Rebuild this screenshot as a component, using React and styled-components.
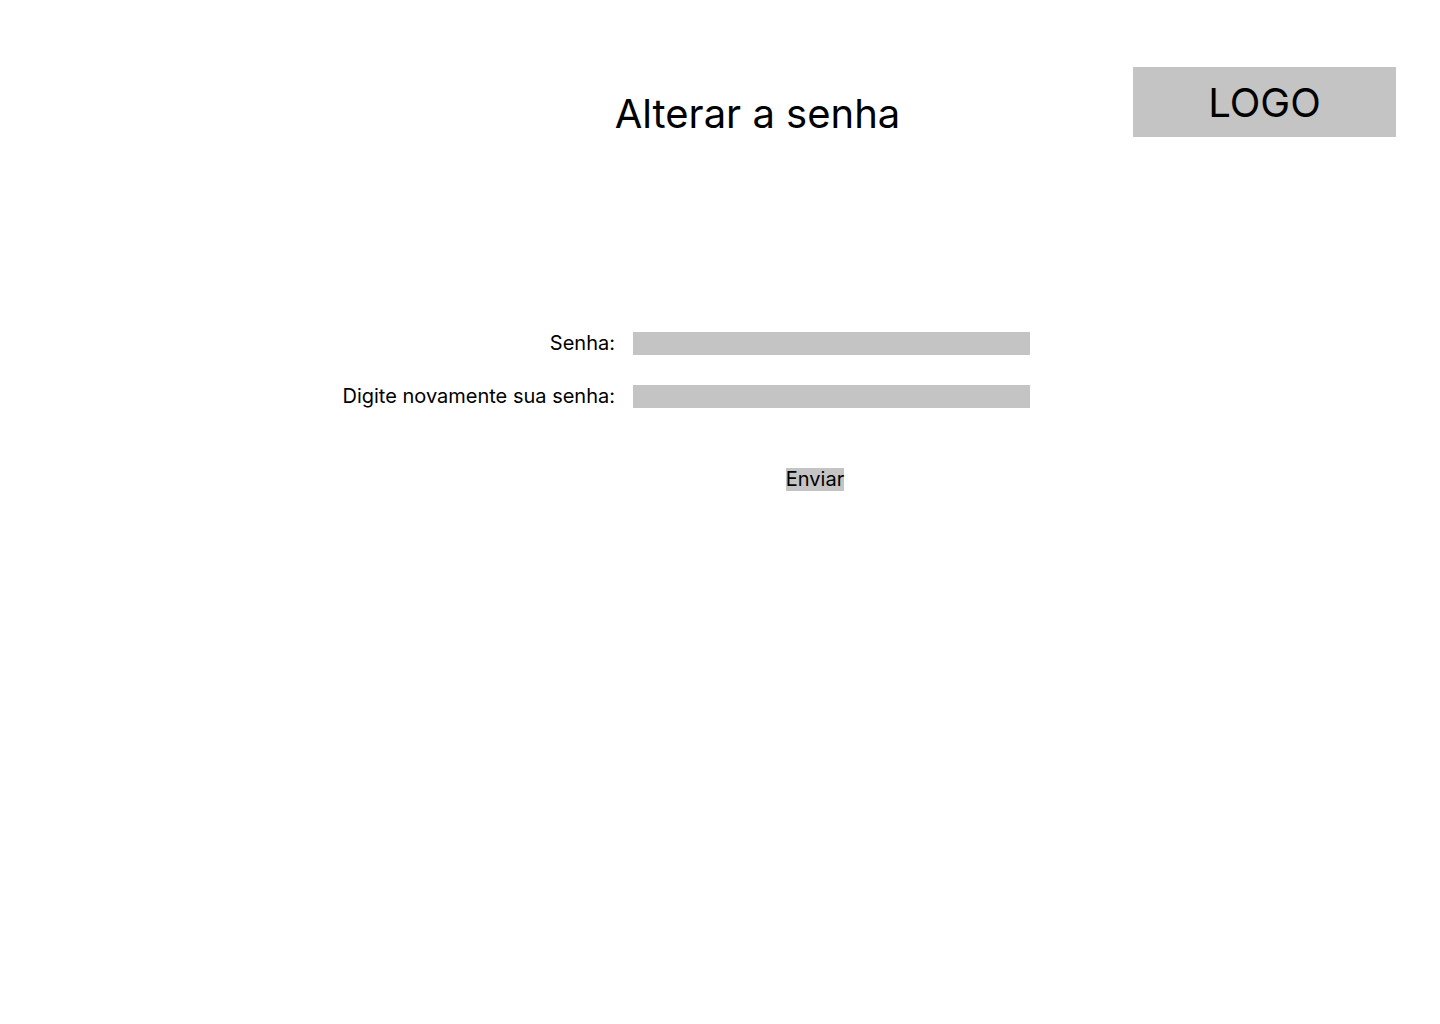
import React from "react";
import styled, { createGlobalStyle } from "styled-components";

const GlobalStyle = createGlobalStyle`
  * { box-sizing: border-box; }
  body {
    margin: 0;
    background: #ffffff;
    color: #000000;
    font-family: Inter, sans-serif;
  }
`;

const Page = styled.div`
  min-height: 100vh;
`;

const Header = styled.header`
  display: grid;
  grid-template-columns: 1fr auto 1fr;
  align-items: start;
  padding: 67px 44px 0 119px;
`;

const Title = styled.h1`
  grid-column: 2;
  margin: 23px 0 0;
  font-size: 40px;
  line-height: 48px;
  font-weight: 400;
`;

const Logo = styled.div`
  justify-self: end;
  width: 263px;
  height: 70px;
  padding-top: 12px;
  background: #c4c4c4;
  font-size: 40px;
  line-height: 48px;
  text-align: center;
`;

const Form = styled.form`
  display: grid;
  grid-template-columns: 615fr 807fr;
  column-gap: 18px;
  row-gap: 30px;
  margin-top: 194px;
`;

const Label = styled.label`
  font-size: 20px;
  line-height: 23px;
  text-align: right;
`;

const Input = styled.input`
  width: 397px;
  height: 23px;
  padding: 0 4px;
  border: 0;
  border-radius: 0;
  background: #c4c4c4;
  font: inherit;
`;

const Actions = styled.div`
  grid-column: 2;
  display: flex;
  justify-content: center;
  width: 364px;
  margin-top: 30px;
`;

const Button = styled.button`
  height: 23px;
  padding: 0;
  border: 0;
  background: #c4c4c4;
  color: inherit;
  font: inherit;
  font-size: 20px;
  line-height: 23px;
  cursor: pointer;
`;

export default function App() {
  return (
    <Page>
      <GlobalStyle />
      <Header>
        <Title>Alterar a senha</Title>
        <Logo>LOGO</Logo>
      </Header>
      <Form onSubmit={(event) => event.preventDefault()}>
        <Label htmlFor="password">Senha:</Label>
        <Input id="password" type="password" />
        <Label htmlFor="confirmation">Digite novamente sua senha:</Label>
        <Input id="confirmation" type="password" />
        <Actions>
          <Button type="submit">Enviar</Button>
        </Actions>
      </Form>
    </Page>
  );
}
